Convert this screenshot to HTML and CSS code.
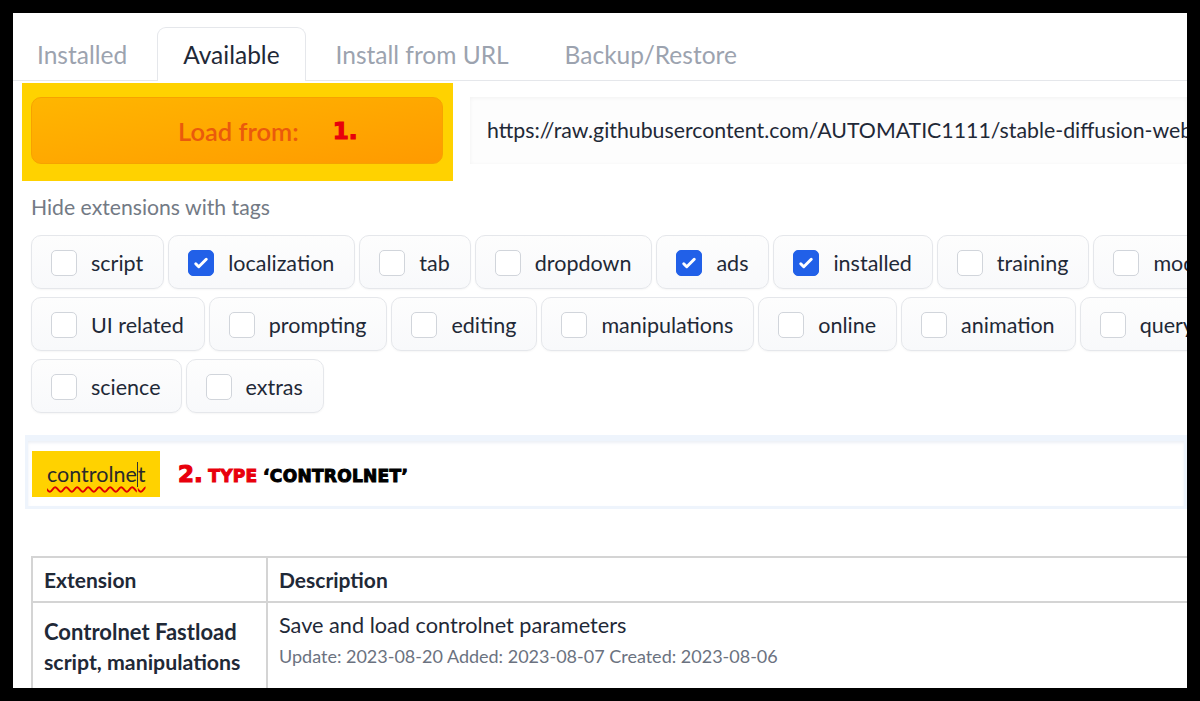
FILE: index.html
```html
<!DOCTYPE html>
<html>
<head>
<meta charset="utf-8">
<link rel="stylesheet" href="styles.css">
</head>
<body>
<div class="frame">
  <div class="tabs">
    <div class="tab first">Installed</div>
    <div class="tab active">Available</div>
    <div class="tab">Install from URL</div>
    <div class="tab">Backup/Restore</div>
  </div>
  <div class="content">
    <div class="load-row">
      <div class="hl-box">
        <div class="load-btn"><span class="load-text">Load from:</span><span class="step">1.</span></div>
      </div>
      <div class="url-input">https://raw.githubusercontent.com/AUTOMATIC1111/stable-diffusion-webui-extensions/master/index.json</div>
    </div>
    <div class="tags-label">Hide extensions with tags</div>
    <div class="chips">
      <div class="chip-row">
        <label class="chip"><span class="box"></span>script</label>
        <label class="chip"><span class="box on"><svg viewBox="0 0 16 16"><path d="M12.207 4.793a1 1 0 010 1.414l-5 5a1 1 0 01-1.414 0l-2-2a1 1 0 011.414-1.414L6.5 9.086l4.293-4.293a1 1 0 011.414 0z" fill="#fff"/></svg></span>localization</label>
        <label class="chip"><span class="box"></span>tab</label>
        <label class="chip"><span class="box"></span>dropdown</label>
        <label class="chip"><span class="box on"><svg viewBox="0 0 16 16"><path d="M12.207 4.793a1 1 0 010 1.414l-5 5a1 1 0 01-1.414 0l-2-2a1 1 0 011.414-1.414L6.5 9.086l4.293-4.293a1 1 0 011.414 0z" fill="#fff"/></svg></span>ads</label>
        <label class="chip"><span class="box on"><svg viewBox="0 0 16 16"><path d="M12.207 4.793a1 1 0 010 1.414l-5 5a1 1 0 01-1.414 0l-2-2a1 1 0 011.414-1.414L6.5 9.086l4.293-4.293a1 1 0 011.414 0z" fill="#fff"/></svg></span>installed</label>
        <label class="chip"><span class="box"></span>training</label>
        <label class="chip"><span class="box"></span>models</label>
      </div>
      <div class="chip-row">
        <label class="chip"><span class="box"></span>UI related</label>
        <label class="chip"><span class="box"></span>prompting</label>
        <label class="chip"><span class="box"></span>editing</label>
        <label class="chip"><span class="box"></span>manipulations</label>
        <label class="chip"><span class="box"></span>online</label>
        <label class="chip"><span class="box"></span>animation</label>
        <label class="chip"><span class="box"></span>query</label>
      </div>
      <div class="chip-row">
        <label class="chip"><span class="box"></span>science</label>
        <label class="chip"><span class="box"></span>extras</label>
      </div>
    </div>
    <div class="search">
      <div class="search-inner">
        <div class="search-hl"><span class="typed">controlne<span class="caret"></span>t</span></div>
        <div class="note"><span class="note-num">2.</span> <span class="note-red">type</span> <span class="note-black">‘controlnet’</span></div>
      </div>
    </div>
    <table class="ext-table">
      <thead>
        <tr><th class="c1">Extension</th><th>Description</th></tr>
      </thead>
      <tbody>
        <tr>
          <td class="c1"><div class="ext-name">Controlnet Fastload</div><div class="ext-tags">script, manipulations</div></td>
          <td><div class="desc">Save and load controlnet parameters</div><div class="dates">Update: 2023-08-20 Added: 2023-08-07 Created: 2023-08-06</div></td>
        </tr>
      </tbody>
    </table>
  </div>
</div>
</body>
</html>
```

FILE: styles.css
```css
* { box-sizing: border-box; }
html, body { margin: 0; padding: 0; background: #000; }
body {
  width: 1200px;
  height: 701px;
  padding: 13px 13px 13px 13px;
  font-family: Lato, "Noto Sans", sans-serif;
  color: #1f2937;
}
.frame {
  width: 1174px;
  height: 675px;
  background: #fff;
  overflow: hidden;
}
.tabs {
  display: flex;
  align-items: flex-end;
  height: 68px;
  border-bottom: 1px solid #e5e7eb;
  margin-left: -2px;
}
.tab {
  height: 53px;
  padding: 0 25px;
  margin-right: 4px;
  font-size: 24.5px;
  line-height: 54px;
  color: #9ca3af;
  border: 1px solid transparent;
  border-bottom: none;
  white-space: nowrap;
}
.tab.active {
  color: #1f2937;
  background: #fff;
  border-color: #e5e7eb;
  border-radius: 9px 9px 0 0;
  margin-bottom: -1px;
  height: 54px;
}
.content {
  padding-left: 18px;
}
.load-row {
  display: flex;
  align-items: flex-start;
  margin-top: 2px;
}
.hl-box {
  background: #ffd200;
  margin-left: -9px;
  padding: 14px 10px 17px 9px;
  flex: none;
}
.load-btn {
  width: 412px;
  height: 67px;
  border-radius: 10px;
  background: linear-gradient(170deg, #ffb600 0%, #ffa800 50%, #ff9a00 100%);
  border: 1px solid #f7a200;
  display: flex;
  align-items: center;
  padding-left: 146px;
}
.load-text {
  font-size: 25.5px;
  font-weight: 600;
  color: #ea5a0c;
}
.step {
  margin-left: 34px;
  font-family: "DejaVu Sans", sans-serif;
  font-weight: bold;
  font-size: 23px;
  color: #e8000c;
  -webkit-text-stroke: 1.2px #e8000c;
}
.url-input {
  margin-left: 17px;
  margin-top: 14px;
  height: 67px;
  flex: 1;
  min-width: 0;
  background: #fdfdfd;
  box-shadow: 0 1px 4px rgba(0,0,0,0.05) inset;
  font-size: 21.3px;
  line-height: 67px;
  padding-left: 17px;
  white-space: nowrap;
  overflow: hidden;
  color: #1f2937;
}
.tags-label {
  margin-top: 13px;
  font-size: 21.2px;
  color: #737a85;
  line-height: 26px;
}
.chips {
  margin-top: 15px;
  display: flex;
  flex-direction: column;
  gap: 8px;
}
.chip-row {
  display: flex;
  gap: 4px;
  white-space: nowrap;
}
.chip {
  flex: none;
  display: flex;
  align-items: center;
  height: 54px;
  padding: 0 20px 0 19px;
  border: 1px solid #e5e7eb;
  border-radius: 10px;
  background: linear-gradient(180deg, #fdfdfd, #f8f9fb);
  box-shadow: 0 1px 2px rgba(0,0,0,0.04);
  font-size: 21.5px;
  color: #1f2937;
  line-height: 26px;
  padding-top: 1px;
}
.box {
  width: 26px;
  height: 26px;
  border: 1px solid #d1d5db;
  border-radius: 5px;
  background: #fff;
  margin-right: 14px;
  flex: none;
  display: flex;
  align-items: center;
  justify-content: center;
}
.box.on {
  background: #2160e8;
  border-color: #2160e8;
}
.box svg { width: 26px; height: 26px; }
.search {
  margin-top: 22px;
  margin-left: -6px;
  border: 3px solid #eef4fc;
  border-top-width: 6px;
  height: 74px;
}
.search-inner {
  height: 100%;
  background: #fff;
  box-shadow: inset 0 2px 3px rgba(200,210,225,0.35);
  display: flex;
  align-items: flex-start;
  padding-left: 4px;
}
.search-hl {
  margin-top: 10px;
  width: 128px;
  height: 46px;
  background: #ffd200;
  display: flex;
  align-items: center;
  padding-left: 15px;
}
.typed {
  font-size: 21.5px;
  color: #2a2a2a;
  text-decoration: underline wavy #e00000;
  text-decoration-thickness: 1.5px;
  text-underline-offset: 4px;
}
.caret {
  display: inline-block;
  width: 1px;
  height: 25px;
  background: #333;
  vertical-align: -5px;
}
.note {
  margin-left: 18px;
  margin-top: 21px;
  font-family: "DejaVu Sans", sans-serif;
  font-weight: bold;
  white-space: nowrap;
  line-height: 24px;
}
.note-num {
  font-size: 23px;
  color: #e8000c;
  -webkit-text-stroke: 1.2px #e8000c;
}
.note-red, .note-black {
  font-size: 17px;
  letter-spacing: 0.3px;
  text-transform: uppercase;
  -webkit-text-stroke: 1px currentColor;
}
.note-red { color: #e8000c; }
.note-black { color: #000; }
.ext-table {
  margin-top: 47px;
  width: 1200px;
  border-collapse: collapse;
  border: 2px solid #d4d4d4;
}
.ext-table th, .ext-table td {
  border: 2px solid #d4d4d4;
  text-align: left;
  vertical-align: top;
  padding: 0 11px;
}
.ext-table th {
  height: 45px;
  font-size: 21px;
  font-weight: 700;
  vertical-align: middle;
}
.ext-table td { height: 110px; }
.ext-table .c1 { width: 235px; }
.ext-name, .ext-tags {
  font-size: 21.3px;
  font-weight: 700;
  line-height: 31px;
}
.ext-name { margin-top: 13px; font-size: 22px; }
.desc {
  font-size: 21.7px;
  line-height: 28px;
  margin-top: 8px;
}
.dates {
  font-size: 18px;
  color: #6b7280;
  line-height: 28px;
  margin-top: 3px;
}
```
